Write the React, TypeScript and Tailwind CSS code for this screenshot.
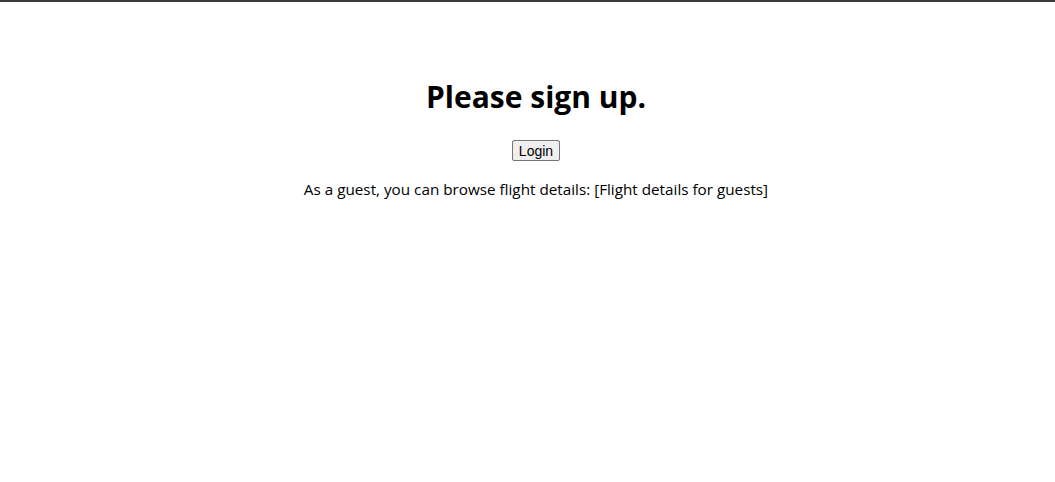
import React from 'react';

const App: React.FC = () => {
  return (
    <div className="min-h-screen bg-white text-black" style={{ fontFamily: '"Open Sans", "Noto Sans", sans-serif' }}>
      <div className="h-[2px] bg-[#3c3c3c]"></div>
      <div className="flex flex-col items-center pt-[71px] pl-[17px]">
        <h1 className="text-[30px] leading-[48px] font-bold">Please sign up.</h1>
        <button
          className="mt-[19px] h-[21px] px-[6px] text-[14px] leading-none bg-[#efefef] border border-[#767676] rounded-[2px]"
          style={{ fontFamily: '"Liberation Sans", Arial, sans-serif' }}
        >
          Login
        </button>
        <p className="mt-[16px] text-[15.25px] leading-6">
          As a guest, you can browse flight details: [Flight details for guests]
        </p>
      </div>
    </div>
  );
};

export default App;
